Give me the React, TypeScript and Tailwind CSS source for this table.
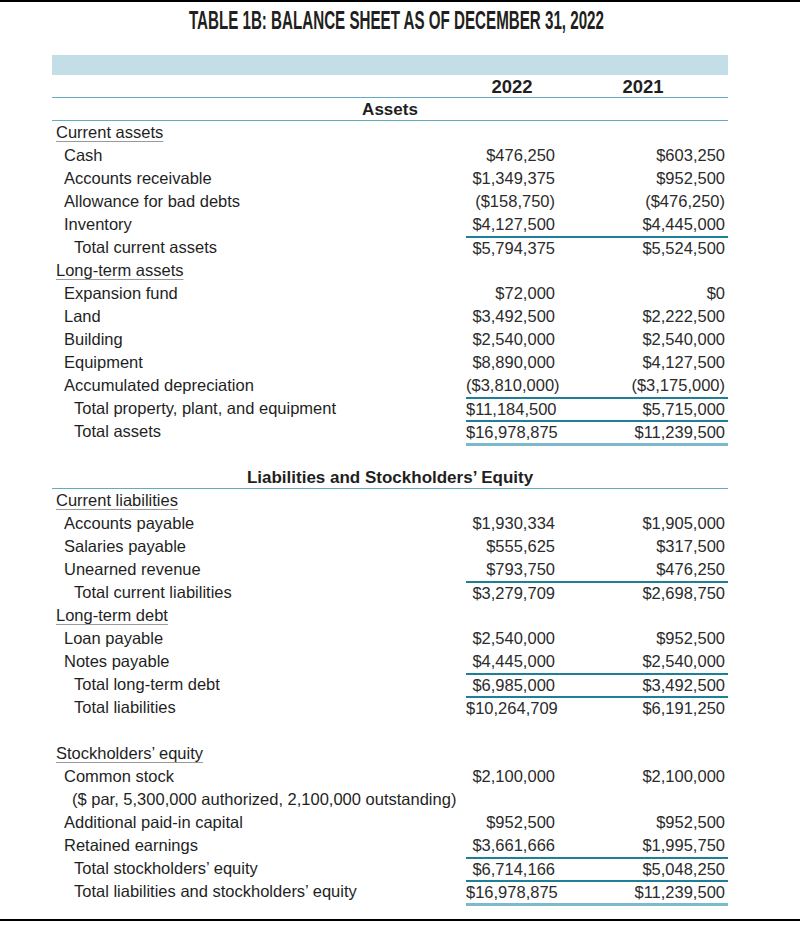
type Row =
  | { kind: "group"; label: string }
  | { kind: "item" | "total"; label: string; a: string; b: string; rule?: boolean; double?: boolean }
  | { kind: "note"; label: string }
  | { kind: "spacer" };

const assets: Row[] = [
  { kind: "group", label: "Current assets" },
  { kind: "item", label: "Cash", a: "$476,250", b: "$603,250" },
  { kind: "item", label: "Accounts receivable", a: "$1,349,375", b: "$952,500" },
  { kind: "item", label: "Allowance for bad debts", a: "($158,750)", b: "($476,250)" },
  { kind: "item", label: "Inventory", a: "$4,127,500", b: "$4,445,000" },
  { kind: "total", label: "Total current assets", a: "$5,794,375", b: "$5,524,500", rule: true },
  { kind: "group", label: "Long-term assets" },
  { kind: "item", label: "Expansion fund", a: "$72,000", b: "$0" },
  { kind: "item", label: "Land", a: "$3,492,500", b: "$2,222,500" },
  { kind: "item", label: "Building", a: "$2,540,000", b: "$2,540,000" },
  { kind: "item", label: "Equipment", a: "$8,890,000", b: "$4,127,500" },
  { kind: "item", label: "Accumulated depreciation", a: "($3,810,000)", b: "($3,175,000)" },
  { kind: "total", label: "Total property, plant, and equipment", a: "$11,184,500", b: "$5,715,000", rule: true },
  { kind: "total", label: "Total assets", a: "$16,978,875", b: "$11,239,500", rule: true, double: true },
];

const liabilities: Row[] = [
  { kind: "group", label: "Current liabilities" },
  { kind: "item", label: "Accounts payable", a: "$1,930,334", b: "$1,905,000" },
  { kind: "item", label: "Salaries payable", a: "$555,625", b: "$317,500" },
  { kind: "item", label: "Unearned revenue", a: "$793,750", b: "$476,250" },
  { kind: "total", label: "Total current liabilities", a: "$3,279,709", b: "$2,698,750", rule: true },
  { kind: "group", label: "Long-term debt" },
  { kind: "item", label: "Loan payable", a: "$2,540,000", b: "$952,500" },
  { kind: "item", label: "Notes payable", a: "$4,445,000", b: "$2,540,000" },
  { kind: "total", label: "Total long-term debt", a: "$6,985,000", b: "$3,492,500", rule: true },
  { kind: "total", label: "Total liabilities", a: "$10,264,709", b: "$6,191,250", rule: true },
  { kind: "spacer" },
  { kind: "group", label: "Stockholders’ equity" },
  { kind: "item", label: "Common stock", a: "$2,100,000", b: "$2,100,000" },
  { kind: "note", label: "($ par, 5,300,000 authorized, 2,100,000 outstanding)" },
  { kind: "item", label: "Additional paid-in capital", a: "$952,500", b: "$952,500" },
  { kind: "item", label: "Retained earnings", a: "$3,661,666", b: "$1,995,750" },
  { kind: "total", label: "Total stockholders’ equity", a: "$6,714,166", b: "$5,048,250", rule: true },
  { kind: "total", label: "Total liabilities and stockholders’ equity", a: "$16,978,875", b: "$11,239,500", rule: true, double: true },
];

function SheetRow({ row }: { row: Row }) {
  if (row.kind === "spacer") {
    return <div className="h-[23px]" />;
  }
  if (row.kind === "group") {
    return (
      <div className="h-[23px] leading-[23px] pl-[4px]">
        <span className="underline decoration-[#9a9a9a] decoration-1 underline-offset-[3px]">{row.label}</span>
      </div>
    );
  }
  if (row.kind === "note") {
    return <div className="h-[23px] leading-[23px] pl-[20px] whitespace-nowrap">{row.label}</div>;
  }
  const cell = row.rule ? "h-[21px] leading-[21px]" : "h-[23px] leading-[23px]";
  return (
    <div className="flex">
      <div className={`w-[414px] h-[23px] leading-[23px] whitespace-nowrap ${row.kind === "total" ? "pl-[22px]" : "pl-[12px]"}`}>
        {row.label}
      </div>
      <div
        className={`flex w-[262px] text-[#2b2b2b] ${row.rule ? "border-t-2 border-[#1f7f99]" : ""} ${
          row.double ? "border-b-[3px] border-b-[#7cb9cd]" : ""
        }`}
      >
        <div className={`w-[92px] pr-[3px] text-right ${cell}`}>{row.a}</div>
        <div className={`w-[170px] pr-[3px] text-right ${cell}`}>{row.b}</div>
      </div>
    </div>
  );
}

export default function App() {
  return (
    <div className="w-[800px] h-[929px] bg-white text-[#1f1f1f] font-['Liberation_Sans',Arial,sans-serif] text-[16.5px]">
      <div className="h-[2px] bg-black" />
      <div className="pt-[4px] h-[34px] flex justify-center">
        <div className="text-[25px] leading-[28px] font-bold text-[#231f20] whitespace-nowrap scale-x-[0.606] ml-[-8px]">
          TABLE 1B: BALANCE SHEET AS OF DECEMBER 31, 2022
        </div>
      </div>

      <div className="ml-[52px] w-[676px] mt-[19px]">
        <div className="h-[20px] bg-[#c4dee8]" />
        <div className="flex h-[23px] leading-[23px] text-[18.5px] font-bold border-b border-[#64abc2]">
          <div className="w-[414px]" />
          <div className="w-[92px] text-center">2022</div>
          <div className="w-[170px] text-center">2021</div>
        </div>
        <div className="h-[23px] leading-[23px] text-[17px] font-bold border-b border-[#64abc2] text-center">Assets</div>
        {assets.map((r, i) => (
          <SheetRow key={"a" + i} row={r} />
        ))}

        <div className="h-[20px]" />
        <div className="h-[23px] leading-[23px] text-[17px] font-bold border-b border-[#64abc2] text-center">
          Liabilities and Stockholders’ Equity
        </div>
        {liabilities.map((r, i) => (
          <SheetRow key={"l" + i} row={r} />
        ))}
      </div>

      <div className="h-[13px]" />
      <div className="h-[2px] bg-black" />
    </div>
  );
}
